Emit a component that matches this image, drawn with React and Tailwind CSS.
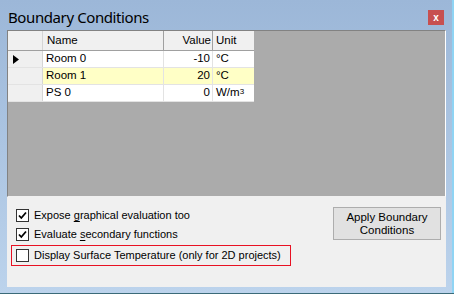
import React from "react";

const Check = () => (
  <svg width="11" height="11" viewBox="0 0 11 11" className="block">
    <path d="M2 5.5 L4.3 8 L9 2.5" fill="none" stroke="#000" strokeWidth="1.8" />
  </svg>
);

function CheckBox({ checked }) {
  return (
    <div className="w-[13px] h-[13px] border border-[#333] bg-white flex items-center justify-center shrink-0">
      {checked && <Check />}
    </div>
  );
}

const rows = [
  { name: "Room 0", value: "-10", unit: "°C", cur: true },
  { name: "Room 1", value: "20", unit: "°C", yellow: true },
  { name: "PS 0", value: "0", unit: <>W/m<sup className="text-[8px] relative top-[-1px]">3</sup></> },
];

export default function App() {
  return (
    <div
      className="w-[454px] h-[294px] relative overflow-hidden flex flex-col bg-gradient-to-b from-[#9cb7d8] to-[#bcd3ec]"
      style={{ fontFamily: '"Liberation Sans", Arial, sans-serif' }}
    >
      <div className="absolute right-0 top-0 bottom-0 w-[2px] bg-[#8fd4f4]" />
      <div className="absolute left-0 right-0 bottom-0 h-[1px] bg-[#3a6a78]" />
      {/* title bar */}
      <div className="h-[30px] flex items-start shrink-0">
        <div
          className="pl-[8px] pt-[7px] text-[15px] leading-[20px] tracking-[-0.4px] text-black"
          style={{ fontFamily: '"Noto Sans", "Open Sans", sans-serif' }}
        >
          Boundary Conditions
        </div>
        <div className="ml-auto mt-[10px] mr-[10px] w-[16px] h-[15px] bg-[#c75050] flex items-center justify-center text-white text-[10px] font-bold leading-none">
          x
        </div>
      </div>
      {/* client */}
      <div className="ml-[7px] mr-[8px] h-[257px] bg-[#f0f0f0] flex flex-col">
        {/* grid */}
        <div className="h-[167px] shrink-0 bg-[#ababab] border-t border-l border-[#828282] border-r-[1px] border-r-white border-b-[1px] border-b-[#f0f0f0] text-[11.5px] text-black">
          <div className="w-[246px] flex flex-col">
            <div className="flex h-[20px] bg-[#f0f0f0] border-b border-[#a0a0a0]">
              <div className="w-[35px] border-r border-[#d5d5d5]" />
              <div className="w-[121px] pl-[4px] flex items-center border-r border-[#a0a0a0]">Name</div>
              <div className="w-[49px] pr-[1px] flex items-center justify-end border-r border-[#a0a0a0]">Value</div>
              <div className="w-[41px] pl-[3px] flex items-center">Unit</div>
            </div>
            {rows.map((r, i) => (
              <div key={i} className="flex h-[17px] border-b border-[#e3e3e3]">
                <div className="w-[35px] bg-[#f0f0f0] border-r border-[#d5d5d5] flex items-center pl-[5px]">
                  {r.cur && (
                    <svg width="6" height="9" viewBox="0 0 6 9"><path d="M0 0 L6 4.5 L0 9 Z" fill="#000" /></svg>
                  )}
                </div>
                <div className={`w-[121px] pl-[3px] flex items-center border-r border-[#e3e3e3] ${r.yellow ? "bg-[#ffffc6]" : "bg-white"}`}>{r.name}</div>
                <div className={`w-[49px] pr-[2px] flex items-center justify-end border-r border-[#e3e3e3] ${r.yellow ? "bg-[#ffffc6]" : "bg-white"}`}>{r.value}</div>
                <div className={`w-[41px] pl-[3px] flex items-center ${r.yellow ? "bg-[#ffffc6]" : "bg-white"}`}>{r.unit}</div>
              </div>
            ))}
          </div>
        </div>
        {/* bottom options */}
        <div className="flex text-[11px] text-black">
          <div className="flex flex-col pl-[4px] pt-[9px]">
            <div className="flex items-center gap-[5px] pl-[5px] h-[19px]">
              <CheckBox checked />
              <span className="whitespace-nowrap">Expose <span className="underline underline-offset-[2px]">g</span>raphical evaluation too</span>
            </div>
            <div className="flex items-center gap-[5px] pl-[5px] h-[19px]">
              <CheckBox checked />
              <span className="whitespace-nowrap">Evaluate <span className="underline underline-offset-[2px]">s</span>econdary functions</span>
            </div>
            <div className="mt-[1px] flex items-center gap-[5px] pl-[4px] h-[21px] w-[280px] border border-[#e81123]">
              <CheckBox />
              <span className="whitespace-nowrap">Display Surface Temperature (only for 2D projects)</span>
            </div>
          </div>
          <div className="ml-auto mr-[5px] mt-[10px] w-[108px] h-[33px] border border-[#adadad] bg-[#e1e1e1] flex items-center justify-center text-center leading-[13px] text-[11.5px]">
            Apply Boundary<br />Conditions
          </div>
        </div>
      </div>
    </div>
  );
}
